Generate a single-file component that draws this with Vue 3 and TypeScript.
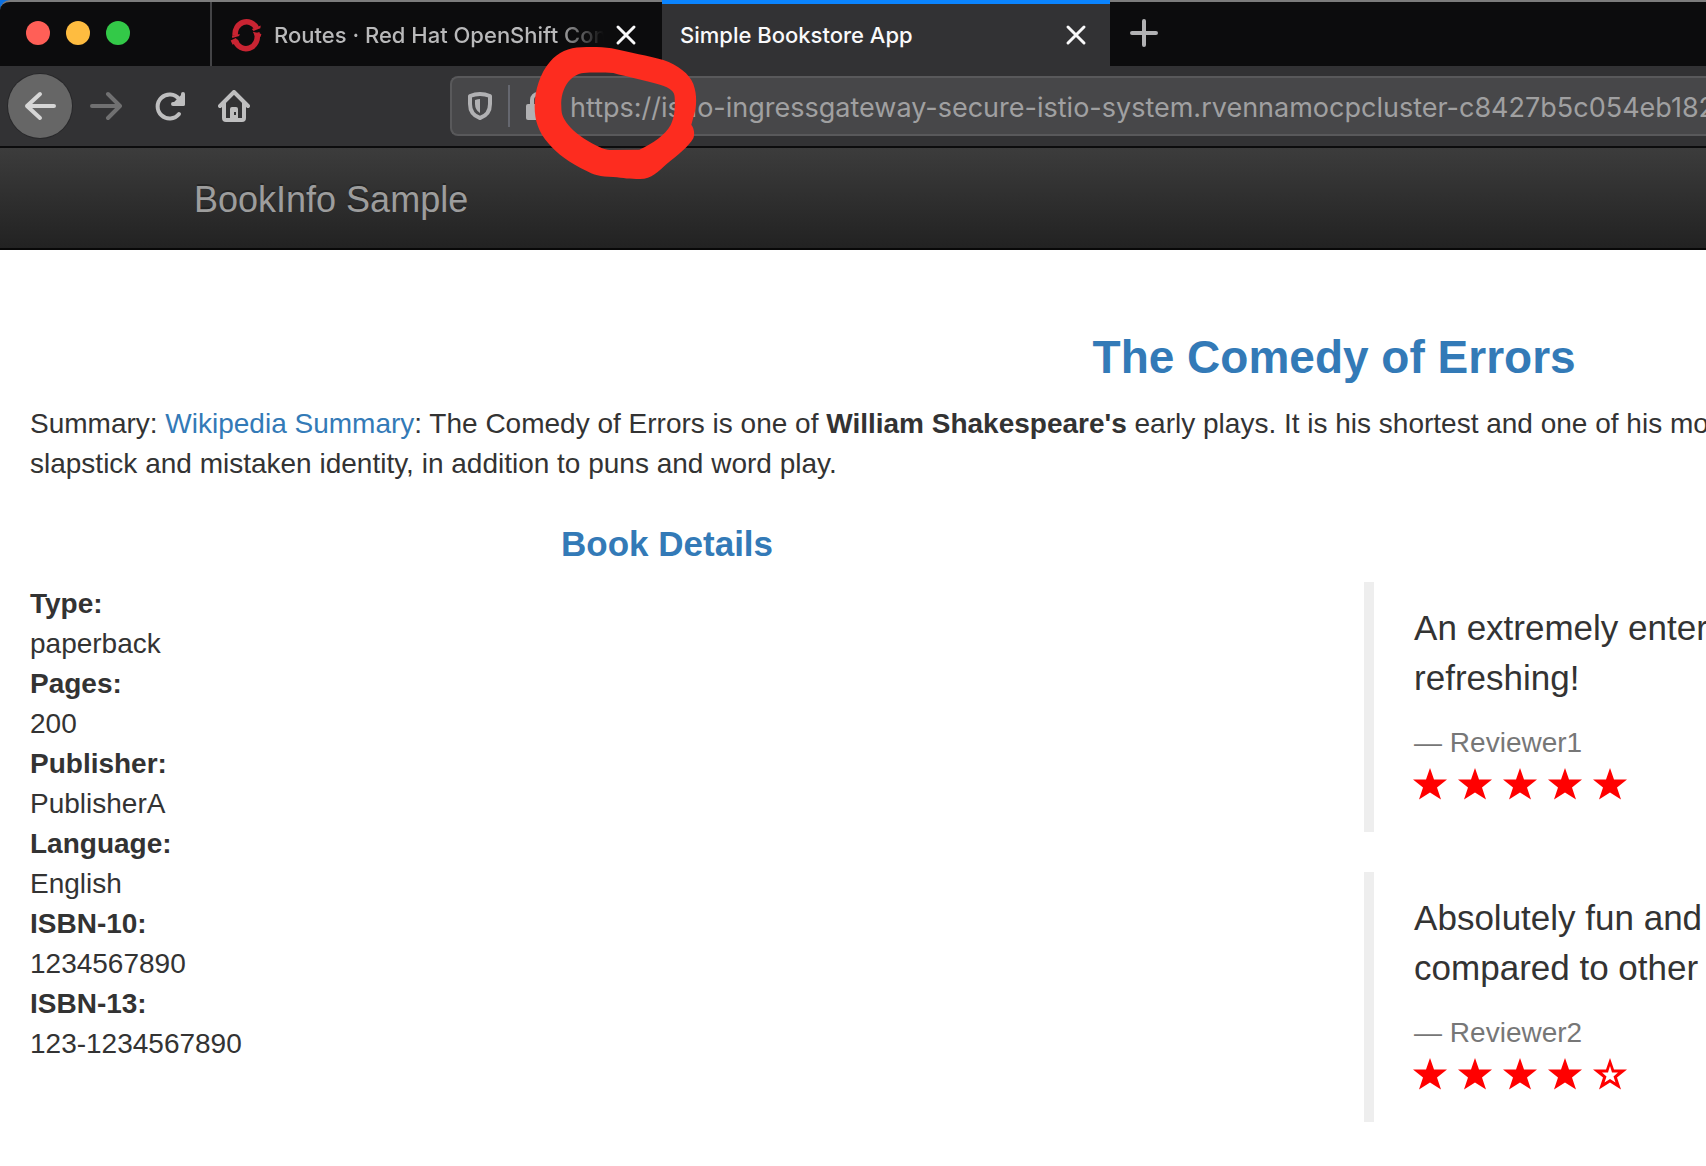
<script setup lang="ts">
import { ref } from 'vue'

interface Detail {
  label: string
  value: string
}

interface Review {
  lines: string[]
  reviewer: string
  stars: number
}

const address = ref('https://istio-ingressgateway-secure-istio-system.rvennamocpcluster-c8427b5c054eb182')

const details: Detail[] = [
  { label: 'Type:', value: 'paperback' },
  { label: 'Pages:', value: '200' },
  { label: 'Publisher:', value: 'PublisherA' },
  { label: 'Language:', value: 'English' },
  { label: 'ISBN-10:', value: '1234567890' },
  { label: 'ISBN-13:', value: '123-1234567890' },
]

const reviews: Review[] = [
  { lines: ['An extremely enter', 'refreshing!'], reviewer: 'Reviewer1', stars: 5 },
  { lines: ['Absolutely fun and', 'compared to other'], reviewer: 'Reviewer2', stars: 4 },
]
</script>

<template>
  <div class="window">
    <header class="chrome">
      <div class="tabs">
        <div class="lights">
          <span class="light close"></span>
          <span class="light minimize"></span>
          <span class="light expand"></span>
        </div>
        <div class="tab">
          <svg class="favicon" viewBox="690 50 98 102" aria-hidden="true">
            <g fill="none" stroke="#c92432" stroke-width="17">
              <path d="M706 102 A35 37 0 0 1 771 79" />
              <path d="M772 94 A34 37 0 0 1 706 117" />
            </g>
            <path fill="#c92432" d="M757 83 784 72 783 80 762 89ZM760 91 786 98 784 106 766 103ZM696 103 720 98 718 104 697 110ZM692 118 708 110 716 121 698 131Z" />
          </svg>
          <span class="tab-title faded">Routes · Red Hat OpenShift Con</span>
          <button class="tab-close" type="button" aria-label="Close tab">
            <svg viewBox="0 0 20 20"><path d="M2 2 18 18M18 2 2 18" /></svg>
          </button>
        </div>
        <div class="tab active">
          <span class="tab-title">Simple Bookstore App</span>
          <button class="tab-close" type="button" aria-label="Close tab">
            <svg viewBox="0 0 20 20"><path d="M2 2 18 18M18 2 2 18" /></svg>
          </button>
        </div>
        <button class="new-tab" type="button" aria-label="New tab">
          <svg viewBox="0 0 28 28"><path d="M14 2V26M2 14H26" /></svg>
        </button>
      </div>

      <div class="toolbar">
        <button class="tool back" type="button" aria-label="Back">
          <svg viewBox="0 0 32 32"><path d="M30 16H3M16 4 3 16 16 28" /></svg>
        </button>
        <button class="tool forward" type="button" aria-label="Forward" disabled>
          <svg viewBox="0 0 32 32"><path d="M2 16H29M18 4 30 16 18 28" /></svg>
        </button>
        <button class="tool" type="button" aria-label="Reload">
          <svg viewBox="0 0 32 32">
            <path d="M25 24A12 12 0 1 1 25 9" />
            <path d="M29 4V14H19" />
            <path class="solid" d="M29 6V14H21Z" />
          </svg>
        </button>
        <button class="tool" type="button" aria-label="Home">
          <svg viewBox="0 0 32 32">
            <path d="M2 16 16 2 30 16M6 13V28Q6 30 8 30H24Q26 30 26 28V13" />
            <path class="solid thin" fill-rule="evenodd" d="M12 30V19Q12 17 14 17H18Q20 17 20 19V30ZM16 22V25H18V22Z" />
          </svg>
        </button>
        <form class="urlbar" @submit.prevent>
          <svg class="shield" viewBox="0 0 24 28" aria-hidden="true">
            <path d="M12 2Q17 2 22 4V12C22 20 18 24 12 26C6 24 2 20 2 12V4Q7 2 12 2Z" />
            <path class="solid" d="M12 7V21Q7 18 7 12V8Q10 7 12 7Z" />
          </svg>
          <span class="divider"></span>
          <svg class="lock" viewBox="0 0 24 28" aria-hidden="true">
            <path d="M6 13V8A6 6 0 0 1 18 8V13" />
            <rect x="0" y="12" width="24" height="16" rx="2" />
          </svg>
          <input v-model="address" class="address" type="text" aria-label="Address" spellcheck="false" />
        </form>
      </div>

      <svg class="marker" viewBox="399 138 498 402" aria-hidden="true">
        <path
          fill="#fd2c1f"
          fill-rule="evenodd"
          d="M545 142C580 140 610 142 635 145C690 158 745 168 790 180C835 195 868 222 880 252C892 285 890 320 882 345L874 374C884 388 884 404 880 415C865 440 835 465 800 492C775 515 755 537 720 537C690 537 670 534 640 531C600 530 580 524 560 513C510 490 470 460 445 430C415 395 404 360 404 320C404 270 420 220 450 185C475 157 505 143 545 142ZM550 219C535 221 520 228 505 245C490 265 482 290 484 320C484 345 490 355 505 375C520 395 555 420 590 437C600 441 610 448 630 450L718 449C760 430 795 405 812 375C822 355 826 330 824 292C824 275 812 264 780 254C740 242 680 230 640 219C615 218 580 217 550 219Z"
        />
      </svg>
    </header>

    <nav class="navbar">
      <a class="brand" href="#">BookInfo Sample</a>
    </nav>

    <main class="page">
      <h1 class="title">The Comedy of Errors</h1>
      <p class="summary">
        Summary: <a href="#">Wikipedia Summary</a>: The Comedy of Errors is one of
        <b>William Shakespeare's</b> early plays. It is his shortest and one of his mo<br />
        slapstick and mistaken identity, in addition to puns and word play.
      </p>
      <div class="columns">
        <section class="column">
          <h2 class="subtitle">Book Details</h2>
          <dl class="details">
            <template v-for="item in details" :key="item.label">
              <dt>{{ item.label }}</dt>
              <dd>{{ item.value }}</dd>
            </template>
          </dl>
        </section>
        <section class="column reviews">
          <blockquote v-for="review in reviews" :key="review.reviewer" class="review">
            <p>
              <span v-for="line in review.lines" :key="line" class="line">{{ line }}</span>
            </p>
            <small>— {{ review.reviewer }}</small>
            <div class="stars" role="img" :aria-label="`${review.stars} of 5 stars`">
              <svg v-for="n in 5" :key="n" viewBox="0 0 34 32">
                <path
                  v-if="n <= review.stars"
                  d="M17 0 21 11.500H34L24 19.500 28 31.500 17 24.500 6 31.500 10 19.500 0 11.500H13Z"
                />
                <path
                  v-else
                  fill-rule="evenodd"
                  d="M17 0 21 11.500H34L24 19.500 28 31.500 17 24.500 6 31.500 10 19.500 0 11.500H13ZM17 8 15 14.500H9L13.500 18.500 11.500 24.500 17 21 22.500 24.500 20.500 18.500 25 14.500H19Z"
                />
              </svg>
            </div>
          </blockquote>
        </section>
      </div>
    </main>
  </div>
</template>

<style>
body {
  margin: 0;
  background: #fff;
}
</style>

<style scoped>
.window {
  overflow: hidden;
  font-family: 'Liberation Sans', Arial, sans-serif;
  font-size: 28px;
  line-height: 40px;
  color: #333;
}

button {
  border: 0;
  padding: 0;
  background: none;
}

svg {
  display: block;
  flex: none;
}

.chrome {
  position: relative;
  background: #0a6fe0;
  font-family: Inter, sans-serif;
}

.tabs {
  display: flex;
  height: 66px;
  box-sizing: border-box;
  border-top: 2px solid #7c7c7c;
  border-top-left-radius: 10px;
  background: #0c0c0d;
}

.lights {
  display: flex;
  align-items: center;
  gap: 16px;
  width: 210px;
  box-sizing: border-box;
  padding: 0 0 2px 26px;
}

.light {
  width: 24px;
  height: 24px;
  border-radius: 50%;
}

.close {
  background: #ff5f57;
}

.minimize {
  background: #febc40;
}

.expand {
  background: #33c948;
}

.tab {
  display: flex;
  align-items: center;
  width: 452px;
  box-sizing: border-box;
  border-left: 2px solid #444446;
  padding: 2px 26px 0 18px;
  font-size: 22px;
  font-weight: 500;
  line-height: 32px;
  color: #b9b9ba;
}

.tab.active {
  width: 448px;
  margin-top: -2px;
  border-left: 0;
  border-top: 4px solid #0a84ff;
  padding: 0 24px 0 18px;
  background: #323234;
  color: #f9f9fa;
}

.favicon {
  width: 32px;
  height: 34px;
  margin-right: 12px;
}

.tab-title {
  flex: 1;
  overflow: hidden;
  white-space: nowrap;
}

.faded {
  -webkit-mask-image: linear-gradient(to left, transparent, #000 48px);
  mask-image: linear-gradient(to left, transparent, #000 48px);
}

.tab-close {
  margin-left: 12px;
}

.tab-close svg {
  width: 20px;
  height: 20px;
  overflow: visible;
  fill: none;
  stroke: #f9f9fa;
  stroke-width: 3;
  stroke-linecap: round;
}

.new-tab {
  width: 68px;
  padding: 0 0 2px 20px;
}

.new-tab svg {
  width: 28px;
  height: 28px;
  fill: none;
  stroke: #b1b1b3;
  stroke-width: 4;
  stroke-linecap: round;
}

.toolbar {
  display: flex;
  align-items: center;
  height: 80px;
  padding-left: 8px;
  border-bottom: 2px solid #0c0c0d;
  background: #323234;
}

.tool {
  display: flex;
  flex: none;
  align-items: center;
  justify-content: center;
  width: 64px;
  height: 64px;
}

.tool svg {
  width: 32px;
  height: 32px;
  fill: none;
  stroke: #bebebf;
  stroke-width: 4;
  stroke-linecap: round;
  stroke-linejoin: round;
}

.tool .solid {
  fill: #bebebf;
}

.tool .thin {
  stroke: none;
}

.back {
  margin-right: 2px;
  border-radius: 50%;
  background: #666;
  box-shadow: 0 0 0 1px #28282a;
}

.tool.back svg {
  stroke: #d6d6d6;
}

.tool.forward svg {
  stroke: #707071;
}

.urlbar {
  display: flex;
  flex: 1;
  align-items: center;
  min-width: 0;
  height: 60px;
  box-sizing: border-box;
  margin-left: 184px;
  border: 2px solid #59595b;
  border-right: 0;
  border-radius: 8px 0 0 8px;
  padding-left: 16px;
  background: #474749;
}

.shield,
.lock {
  width: 24px;
  height: 28px;
  fill: none;
  stroke: #b1b1b3;
  stroke-width: 4;
  stroke-linejoin: round;
}

.shield .solid {
  fill: #b1b1b3;
  stroke: none;
}

.lock rect {
  fill: #b1b1b3;
  stroke: none;
}

.divider {
  width: 2px;
  height: 42px;
  margin: 0 16px;
  background: #65676f;
}

.address {
  flex: 1;
  min-width: 0;
  height: 56px;
  margin-left: 20px;
  border: 0;
  padding: 2px 0 0;
  outline: 0;
  background: none;
  font-family: Inter, sans-serif;
  font-size: 27px;
  color: #a0a0a1;
}

/* Hand-drawn ring round the protocol part of the address */
.marker {
  position: absolute;
  z-index: 1;
  top: 46px;
  left: 533px;
  width: 166px;
  height: 134px;
  pointer-events: none;
}

.navbar {
  display: flex;
  align-items: center;
  height: 102px;
  box-sizing: border-box;
  padding: 4px 0 0 194px;
  border-bottom: 2px solid #080808;
  background: linear-gradient(#3c3c3c, #222);
}

.brand {
  font-size: 36px;
  color: #9d9d9d;
  text-decoration: none;
  text-shadow: 0 -2px 0 rgba(0, 0, 0, 0.25);
}

/* The document is laid out wider than the window and runs off its right edge */
.page {
  width: 156.4%;
  box-sizing: border-box;
  padding: 81px 30px 44px;
}

.title {
  margin: 0 0 20px;
  font-size: 46px;
  line-height: 53px;
  text-align: center;
  color: #337ab7;
}

.summary {
  margin: 0 0 40px;
  white-space: nowrap;
}

.summary a {
  color: #337ab7;
  text-decoration: none;
}

.columns {
  display: flex;
  gap: 60px;
}

.column {
  flex: 1;
  min-width: 0;
}

.subtitle {
  margin: 0 0 20px;
  font-size: 35px;
  line-height: 40px;
  text-align: center;
  color: #337ab7;
}

.details {
  margin: 0;
}

.details dt {
  font-weight: bold;
}

.details dd {
  margin: 0;
}

.reviews {
  padding-top: 58px;
}

.review {
  margin: 0 0 40px;
  border-left: 10px solid #eee;
  padding: 21px 40px 20px;
}

.review p {
  margin: 0 0 20px;
  font-size: 35px;
  line-height: 50px;
}

.line {
  display: block;
}

.review small {
  display: block;
  font-size: 28px;
  color: #777;
}

.stars {
  display: flex;
  align-items: center;
  gap: 11px;
  height: 49px;
  margin-left: -1px;
}

.stars svg {
  width: 34px;
  height: 32px;
  margin-bottom: 8px;
  fill: #f00;
}
</style>
